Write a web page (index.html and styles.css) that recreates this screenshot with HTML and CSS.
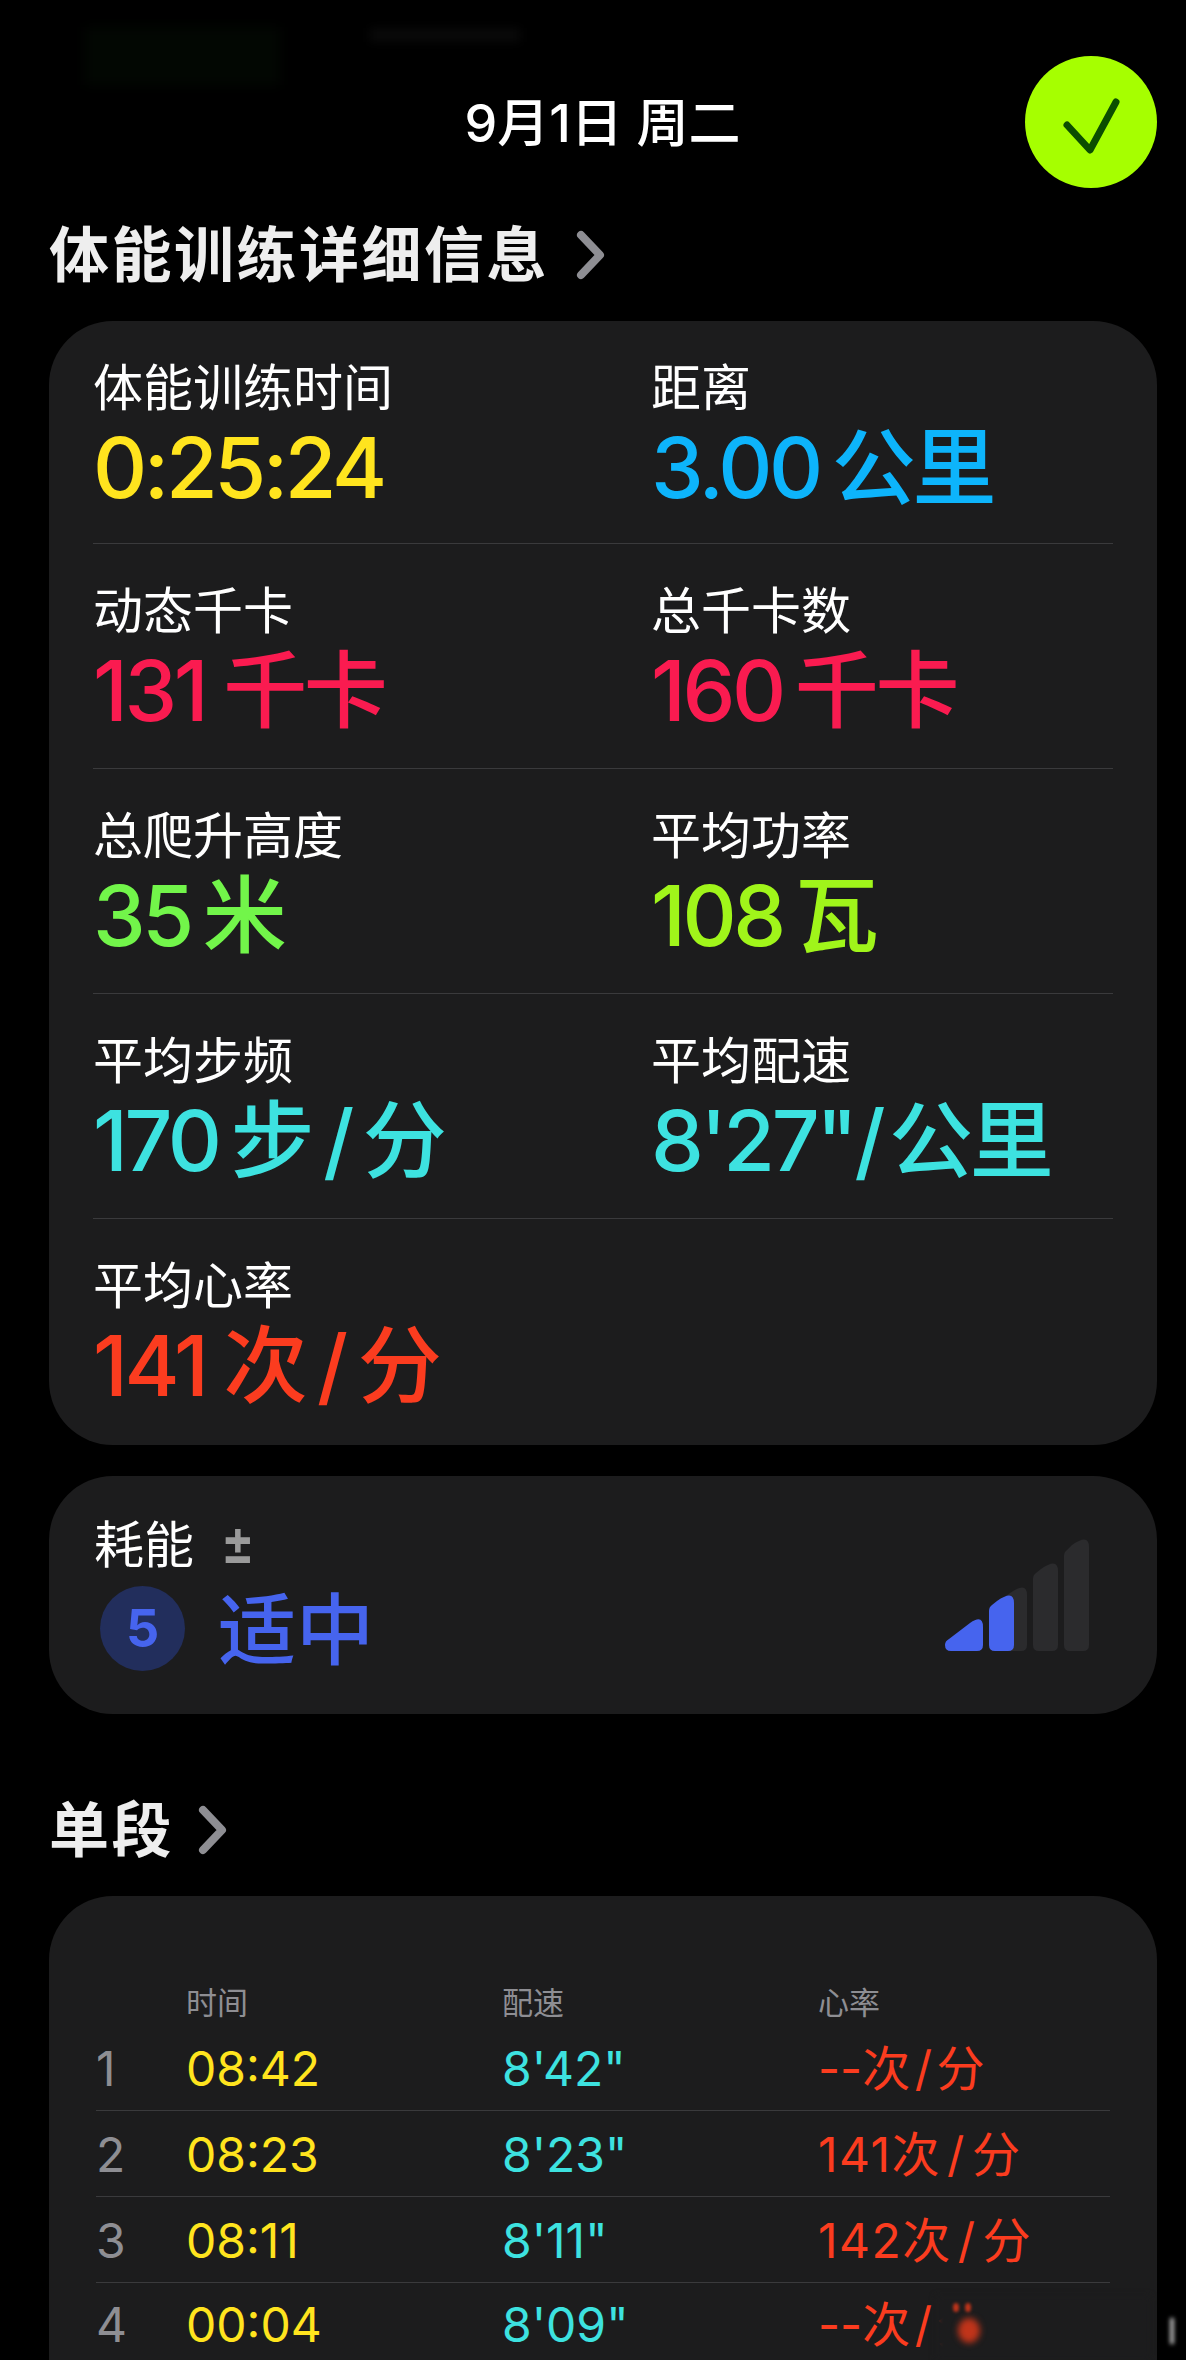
FILE: index.html
```html
<!DOCTYPE html>
<html lang="zh">

<head>
    <meta charset="utf-8">
    <title>体能训练</title>
    <link rel="stylesheet" href="styles.css">
</head>

<body>
    <div class="topmark-a"></div>
    <div class="topmark-b"></div>

    <header class="top">
        <div class="date">9月1日 周二</div>
        <div class="done">
            <svg width="132" height="132" viewBox="0 0 132 132">
                <path d="M42 69 L65 94 L91 46" fill="none" stroke="#0b4d00" stroke-width="7" stroke-linecap="round" stroke-linejoin="round"/>
            </svg>
        </div>
    </header>

    <h2 class="title">
        <span>体能训练详细信息</span>
        <svg class="chev" width="30" height="50" viewBox="0 0 30 50">
            <path d="M6 5 L25 25 L6 45" fill="none" stroke="#8e8e93" stroke-width="8" stroke-linecap="round" stroke-linejoin="round"/>
        </svg>
    </h2>

    <section class="card stats">
        <div class="row">
            <div class="cell">
                <div class="label">体能训练时间</div>
                <div class="value yellow">0:25:24</div>
            </div>
            <div class="cell">
                <div class="label">距离</div>
                <div class="value blue">3.00 公里</div>
            </div>
        </div>
        <div class="row">
            <div class="cell">
                <div class="label">动态千卡</div>
                <div class="value pink gap">131 千卡</div>
            </div>
            <div class="cell">
                <div class="label">总千卡数</div>
                <div class="value pink">160 千卡</div>
            </div>
        </div>
        <div class="row">
            <div class="cell">
                <div class="label">总爬升高度</div>
                <div class="value green">35 米</div>
            </div>
            <div class="cell">
                <div class="label">平均功率</div>
                <div class="value lime">108 瓦</div>
            </div>
        </div>
        <div class="row">
            <div class="cell">
                <div class="label">平均步频</div>
                <div class="value cyan">170 步 / 分</div>
            </div>
            <div class="cell">
                <div class="label">平均配速</div>
                <div class="value cyan pace">8'27"/ 公里</div>
            </div>
        </div>
        <div class="row">
            <div class="cell">
                <div class="label">平均心率</div>
                <div class="value red gap">141 <span class="tight">次 / 分</span></div>
            </div>
        </div>
    </section>

    <section class="card effort">
        <div class="effort-left">
            <div class="effort-label">耗能<span class="plusminus">±</span></div>
            <div class="effort-val">
                <span class="badge">5</span>
                <span class="effort-text">适中</span>
            </div>
        </div>
        <svg class="bars" width="146" height="116" viewBox="0 0 146 116">
            <path d="M58 108 V66 Q58 62 61 60 L66 56 Q83 44 83 58 V108 Q83 114 77 114 H64 Q58 114 58 108 Z" fill="#2b2b2d"/>
            <path d="M89 108 V42 Q89 38 92 36 L97 32 Q114 20 114 34 V108 Q114 114 108 114 H95 Q89 114 89 108 Z" fill="#2b2b2d"/>
            <path d="M120 108 V19 Q120 15 123 13 L128 8 Q145 -4 145 10 V108 Q145 114 139 114 H126 Q120 114 120 108 Z" fill="#2b2b2d"/>
            <path d="M45 108 V74 Q45 70 48 68 L53 64 Q70 52 70 66 V108 Q70 114 64 114 H51 Q45 114 45 108 Z" fill="#4664ee"/>
            <path d="M1 108 Q1 104 5 102 L26 86 Q39 77 39 90 V108 Q39 114 33 114 H7 Q1 114 1 108 Z" fill="#4664ee"/>
        </svg>
    </section>

    <h2 class="title title-second">
        <span>单段</span>
        <svg class="chev" width="30" height="50" viewBox="0 0 30 50">
            <path d="M6 5 L25 25 L6 45" fill="none" stroke="#8e8e93" stroke-width="8" stroke-linecap="round" stroke-linejoin="round"/>
        </svg>
    </h2>

    <section class="card splits">
        <div class="split-head">
            <span></span><span>时间</span><span>配速</span><span>心率</span>
        </div>
        <div class="split">
            <span class="idx">1</span><span class="yellow">08:42</span><span class="cyan">8'42"</span><span class="red">--次 / 分</span>
        </div>
        <div class="split">
            <span class="idx">2</span><span class="yellow">08:23</span><span class="cyan">8'23"</span><span class="red wide">141次 / 分</span>
        </div>
        <div class="split">
            <span class="idx">3</span><span class="yellow">08:11</span><span class="cyan">8'11"</span><span class="red wide">142次 / 分</span>
        </div>
        <div class="split">
            <span class="idx">4</span><span class="yellow">00:04</span><span class="cyan">8'09"</span><span class="red">--次 / 分</span>
        </div>
    </section>

    <!-- smudge left over in the bottom corner -->
    <div class="wm"></div>
    <div class="wm-blob"></div>
    <div class="wm-dot wm-dot1"></div>
    <div class="wm-dot wm-dot2"></div>
    <div class="wm-speck"></div>
</body>

</html>
```

FILE: styles.css
```css
* {
    box-sizing: border-box;
}

html,
body {
    margin: 0;
    background-color: #000;
}

body {
    position: relative;
    width: 1186px;
    height: 2360px;
    overflow: hidden;
    padding: 56px 29px 0 49px;
    font-family: Inter, "Noto Sans CJK SC", sans-serif;
    color: #fff;
}

.top {
    display: flex;
    justify-content: center;
    align-items: center;
    height: 132px;
    position: relative;
}

.date {
    font-size: 52px;
    line-height: 132px;
    font-weight: 500;
    margin: 3px 1px 0 0;
}

.done {
    position: absolute;
    right: 0;
    top: 0;
    width: 132px;
    height: 132px;
    border-radius: 50%;
    background-color: #a6ff00;
}

.done svg {
    display: block;
}

.title {
    display: flex;
    align-items: center;
    margin: 32px 0 0 0;
    height: 70px;
    font-size: 60px;
    line-height: 70px;
    font-weight: 700;
    color: #eee;
    letter-spacing: 2.5px;
}

.chev {
    margin-left: 26px;
}

.title-second {
    margin-top: 81px;
}

.title-second .chev {
    margin-left: 23px;
}

.card {
    background-color: #1c1c1d;
    border-radius: 64px;
}

.stats {
    margin-top: 31px;
    height: 1124px;
    padding: 0 44px;
}

.row {
    display: flex;
    height: 225px;
    border-bottom: 1px solid #3a3a3c;
    padding-top: 36px;
}

.row:first-child {
    height: 223px;
}

.row:last-child {
    height: 224px;
    border-bottom: 0;
}

.cell {
    flex: none;
    width: 558px;
}

.cell + .cell {
    width: 462px;
}

.label {
    font-size: 50px;
    line-height: 62px;
}

.value {
    font-size: 84px;
    line-height: 92px;
    font-weight: 500;
    white-space: pre;
    letter-spacing: -3.4px;
    word-spacing: -7px;
    margin-top: 3px;
}

.value.gap {
    word-spacing: -1px;
}

.value .tight {
    word-spacing: -6px;
}

.value.pace {
    word-spacing: -12px;
}

.yellow {
    color: #ffe41e;
}

.blue {
    color: #0db4fb;
}

.pink {
    color: #fa1b50;
}

.green {
    color: #72f54a;
}

.lime {
    color: #a0f51a;
}

.cyan {
    color: #3de2e0;
}

.red {
    color: #fb3c1f;
}

.effort {
    margin-top: 31px;
    height: 238px;
    padding: 38px 67px 0 45px;
    display: flex;
    justify-content: space-between;
}

.effort-label {
    display: flex;
    align-items: center;
    font-size: 50px;
    line-height: 62px;
}

.plusminus {
    display: inline-block;
    font-size: 50px;
    font-weight: 600;
    color: #9a9a9a;
    margin: -6px 0 0 27px;
    transform: scaleY(1.3);
}

.effort-val {
    display: flex;
    align-items: center;
    margin: 8px 0 0 6px;
}

.badge {
    width: 85px;
    height: 85px;
    border-radius: 50%;
    background-color: #222e5c;
    color: #4664ee;
    font-size: 52px;
    font-weight: 700;
    display: flex;
    align-items: center;
    justify-content: center;
}

.effort-text {
    margin: 4px 0 0 33px;
    font-size: 78px;
    line-height: 85px;
    font-weight: 500;
    color: #4664ee;
}

.bars {
    margin-top: 23px;
}

.splits {
    margin-top: 31px;
    height: 465px;
    padding: 85px 47px 0 47px;
    border-radius: 64px 64px 0 0;
}

.split-head,
.split {
    display: grid;
    grid-template-columns: 90px 316px 316px 1fr;
}

.split-head {
    font-size: 31px;
    line-height: 44px;
    color: #8e8e93;
}

.split {
    height: 86px;
    padding-top: 3px;
    align-items: center;
    font-size: 48px;
    line-height: 60px;
    border-bottom: 1px solid #3a3a3c;
    white-space: pre;
    word-spacing: -9px;
}

.split:last-child {
    height: 80px;
    border-bottom: 0;
}

.split .wide {
    letter-spacing: 1.5px;
}

.idx {
    color: #8e8e93;
}

/* faint leftover marks at the top */
.topmark-a {
    position: absolute;
    left: 85px;
    top: 27px;
    width: 195px;
    height: 58px;
    background-color: #020702;
    filter: blur(6px);
}

.topmark-b {
    position: absolute;
    left: 370px;
    top: 28px;
    width: 150px;
    height: 14px;
    background-color: #090909;
    filter: blur(4px);
}

.wm {
    position: absolute;
    left: 936px;
    top: 2296px;
    width: 214px;
    height: 64px;
    background-color: #1c1c1d;
    filter: blur(3px);
}

.wm-blob {
    position: absolute;
    left: 958px;
    top: 2318px;
    width: 22px;
    height: 25px;
    border-radius: 50%;
    background-color: #c0341a;
    filter: blur(3px);
}

.wm-dot {
    position: absolute;
    top: 2303px;
    width: 6px;
    height: 9px;
    border-radius: 50%;
    background-color: #c0341a;
    filter: blur(1.5px);
}

.wm-dot1 {
    left: 953px;
}

.wm-dot2 {
    left: 965px;
}

.wm-speck {
    position: absolute;
    left: 1170px;
    top: 2318px;
    width: 4px;
    height: 26px;
    background-color: #bbb;
    filter: blur(2px);
}
```
